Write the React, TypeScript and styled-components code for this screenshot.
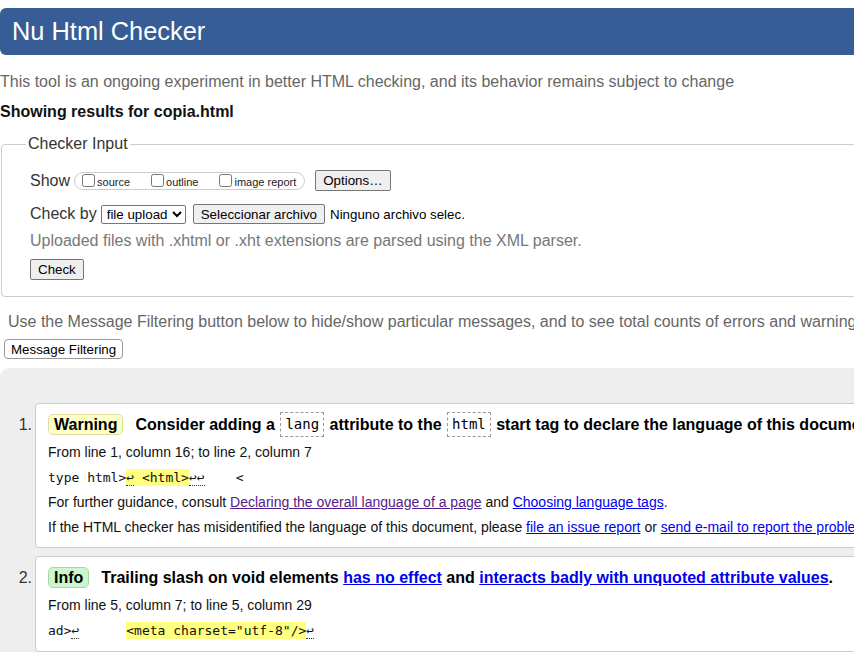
import React from "react";
import styled, { createGlobalStyle, css } from "styled-components";

const GlobalStyle = createGlobalStyle`
  html, body {
    margin: 0;
    padding: 0;
    overflow: hidden;
    background: #fff;
  }
  body {
    font-family: "Liberation Sans", Arial, sans-serif;
    font-size: 16px;
    color: #000;
  }
`;

const Page = styled.div`
  width: 1120px;
  padding-top: 8px;
`;

const Header = styled.h1`
  margin: 0;
  height: 47px;
  display: flex;
  align-items: center;
  padding-left: 12px;
  background: #365d95;
  color: #fff;
  font-size: 25.4px;
  font-weight: normal;
  border-radius: 6px 0 0 6px;
`;

const Intro = styled.p`
  margin: 17px 0 0;
  line-height: 20px;
  color: #666;
`;

const ResultsFor = styled.p`
  margin: 10px 0 0;
  line-height: 20px;
  font-weight: bold;
  color: #111;
`;

const InputFieldset = styled.fieldset`
  margin: 12px 0 0 1px;
  padding: 16px 20px 16px 28px;
  border: 1px solid #ccc;
  border-radius: 4px;
  min-width: 0;
`;

const Legend = styled.legend`
  padding: 0 2px;
  margin-left: -4px;
  font-size: 16px;
  line-height: 20px;
  color: #333;
`;

const FormRow = styled.div<{ $mt?: number; $h: number }>`
  display: flex;
  align-items: center;
  height: ${(p) => p.$h}px;
  margin-top: ${(p) => p.$mt ?? 0}px;
`;

const FieldLabel = styled.span`
  font-size: 16px;
  color: #333;
`;

const ShowGroup = styled.span`
  display: inline-flex;
  align-items: center;
  gap: 21px;
  height: 16px;
  margin-left: 4px;
  padding: 0 8px 0 7px;
  border: 1px solid #ccc;
  border-radius: 9px;
`;

const CheckOption = styled.label`
  display: inline-flex;
  align-items: center;
  font-size: 11px;
  color: #222;
`;

const Checkbox = styled.input.attrs({ type: "checkbox" })`
  width: 13px;
  height: 13px;
  margin: 0 2px 0 0;
`;

const OptionText = styled.span`
  padding-top: 3px;
`;

const NativeButton = styled.button<{ $ml?: number; $h?: number }>`
  height: ${(p) => p.$h ?? 21}px;
  margin-left: ${(p) => p.$ml ?? 0}px;
  padding: 0 7px;
  font-family: "Liberation Sans", Arial, sans-serif;
  font-size: 13.33px;
  color: #000;
  background: #efefef;
  border: 1px solid #767676;
  border-radius: 2px;
`;

const ModeSelect = styled.select`
  width: 85px;
  height: 19px;
  margin-left: 4px;
  padding: 0 0 0 1px;
  font-family: "Liberation Sans", Arial, sans-serif;
  font-size: 13.33px;
  color: #000;
  background: #fff;
  border: 1px solid #767676;
  border-radius: 2px;
`;

const FileStatus = styled.span`
  margin-left: 5px;
  font-size: 13.33px;
  color: #000;
`;

const Hint = styled.p`
  margin: 7px 0 0;
  line-height: 20px;
  color: #777;
`;

const FilterNote = styled.p`
  margin: 15px 0 0;
  padding-left: 8px;
  line-height: 20px;
  color: #666;
  white-space: nowrap;
`;

const FilterButton = styled.button`
  display: block;
  height: 20px;
  margin: 7px 0 0 4px;
  padding: 0 6px;
  font-family: "Liberation Sans", Arial, sans-serif;
  font-size: 13.33px;
  color: #000;
  background: #fff;
  border: 1px solid #999;
  border-radius: 4px;
`;

const Results = styled.section`
  margin-top: 9px;
  padding: 35px 0 40px;
  background: #eee;
  border-radius: 9px 0 0 0;
`;

const MessageList = styled.ol`
  margin: 0;
  padding: 0;
  list-style: none;
`;

const MessageItem = styled.li`
  display: flex;
  align-items: flex-start;
  margin-bottom: 8px;
`;

const ItemNumber = styled.span`
  width: 32px;
  flex: none;
  padding: 9px 3px 0 0;
  text-align: right;
  line-height: 25px;
  font-size: 16px;
  color: #333;
`;

const MessageBox = styled.div`
  flex: 1;
  padding: 8px 12px;
  background: #fff;
  border: 1px solid #ccc;
  border-radius: 4px;
`;

const MessageTitle = styled.p`
  margin: 0;
  line-height: 25px;
  font-weight: bold;
  white-space: nowrap;
  color: #000;
`;

const badgeColors = {
  warning: css`
    background: #ffffc8;
    border-color: #e2dca0;
  `,
  info: css`
    background: #ccf7cc;
    border-color: #a9d6a9;
  `,
};

const Badge = styled.strong<{ $kind: "warning" | "info" }>`
  display: inline-block;
  vertical-align: top;
  margin: 2px 12px 0 0;
  padding: 0 5px;
  line-height: 19px;
  border: 1px solid;
  border-radius: 5px;
  ${(p) => badgeColors[p.$kind]}
`;

const InlineCode = styled.code`
  display: inline-block;
  vertical-align: top;
  height: 23px;
  margin: 0 1px;
  padding: 0 4px;
  line-height: 23px;
  font-family: "DejaVu Sans Mono", Consolas, monospace;
  font-size: 14px;
  font-weight: normal;
  color: #000;
  border: 1px dashed #999;
`;

const Location = styled.p<{ $mt: number }>`
  margin: ${(p) => p.$mt}px 0 0;
  line-height: 24px;
  font-size: 14px;
  color: #111;
`;

const Extract = styled.p<{ $mt: number }>`
  margin: ${(p) => p.$mt}px 0 0;
  line-height: 24px;
  font-family: "DejaVu Sans Mono", Consolas, monospace;
  font-size: 13px;
  white-space: pre;
  color: #111;
`;

const Highlight = styled.mark`
  padding: 1px 0;
  background: #ffff80;
  color: #111;
`;

const LineBreak = styled.span`
  border-bottom: 1px dotted #333;
`;

const MessageText = styled.p<{ $mt: number }>`
  margin: ${(p) => p.$mt}px 0 0;
  line-height: 24px;
  font-size: 14px;
  white-space: nowrap;
  color: #111;
`;

const Link = styled.a<{ $visited?: boolean }>`
  color: ${(p) => (p.$visited ? "#551a8b" : "#0000ee")};
  text-decoration: underline;
`;

export default function App() {
  return (
    <>
      <GlobalStyle />
      <Page>
        <Header>Nu Html Checker</Header>
        <Intro>
          This tool is an ongoing experiment in better HTML checking, and its behavior remains subject to change
        </Intro>
        <ResultsFor>Showing results for copia.html</ResultsFor>

        <InputFieldset>
          <Legend>Checker Input</Legend>
          <FormRow $h={21}>
            <FieldLabel>Show</FieldLabel>
            <ShowGroup>
              <CheckOption>
                <Checkbox />
                <OptionText>source</OptionText>
              </CheckOption>
              <CheckOption>
                <Checkbox />
                <OptionText>outline</OptionText>
              </CheckOption>
              <CheckOption>
                <Checkbox />
                <OptionText>image report</OptionText>
              </CheckOption>
            </ShowGroup>
            <NativeButton $ml={10}>Options…</NativeButton>
          </FormRow>
          <FormRow $h={20} $mt={13}>
            <FieldLabel>Check by</FieldLabel>
            <ModeSelect defaultValue="file">
              <option value="address">address</option>
              <option value="file">file upload</option>
              <option value="text">text input</option>
            </ModeSelect>
            <NativeButton $ml={7} $h={20}>Seleccionar archivo</NativeButton>
            <FileStatus>Ninguno archivo selec.</FileStatus>
          </FormRow>
          <Hint>Uploaded files with .xhtml or .xht extensions are parsed using the XML parser.</Hint>
          <FormRow $h={21} $mt={8}>
            <NativeButton>Check</NativeButton>
          </FormRow>
        </InputFieldset>

        <FilterNote>
          Use the Message Filtering button below to hide/show particular messages, and to see total counts of errors and warnings.
        </FilterNote>
        <FilterButton>Message Filtering</FilterButton>

        <Results>
          <MessageList>
            <MessageItem>
              <ItemNumber>1.</ItemNumber>
              <MessageBox>
                <MessageTitle>
                  <Badge $kind="warning">Warning</Badge>
                  Consider adding a <InlineCode>lang</InlineCode> attribute to the{" "}
                  <InlineCode>html</InlineCode> start tag to declare the language of this document.
                </MessageTitle>
                <Location $mt={3}>From line 1, column 16; to line 2, column 7</Location>
                <Extract $mt={2}>
                  {"type html>"}
                  <Highlight>
                    <LineBreak>↩</LineBreak>
                    {" <html>"}
                  </Highlight>
                  <LineBreak>↩↩</LineBreak>
                  {"    <"}
                </Extract>
                <MessageText $mt={0}>
                  For further guidance, consult{" "}
                  <Link $visited href="#">Declaring the overall language of a page</Link> and{" "}
                  <Link href="#">Choosing language tags</Link>.
                </MessageText>
                <MessageText $mt={1}>
                  If the HTML checker has misidentified the language of this document, please{" "}
                  <Link href="#">file an issue report</Link> or{" "}
                  <Link href="#">send e-mail to report the problem</Link>.
                </MessageText>
              </MessageBox>
            </MessageItem>
            <MessageItem>
              <ItemNumber>2.</ItemNumber>
              <MessageBox>
                <MessageTitle>
                  <Badge $kind="info">Info</Badge>
                  Trailing slash on void elements <Link href="#">has no effect</Link> and{" "}
                  <Link href="#">interacts badly with unquoted attribute values</Link>.
                </MessageTitle>
                <Location $mt={3}>From line 5, column 7; to line 5, column 29</Location>
                <Extract $mt={2}>
                  {"ad>"}
                  <LineBreak>↩</LineBreak>
                  {"      "}
                  <Highlight>{'<meta charset="utf-8"/>'}</Highlight>
                  <LineBreak>↩</LineBreak>
                </Extract>
              </MessageBox>
            </MessageItem>
          </MessageList>
        </Results>
      </Page>
    </>
  );
}
